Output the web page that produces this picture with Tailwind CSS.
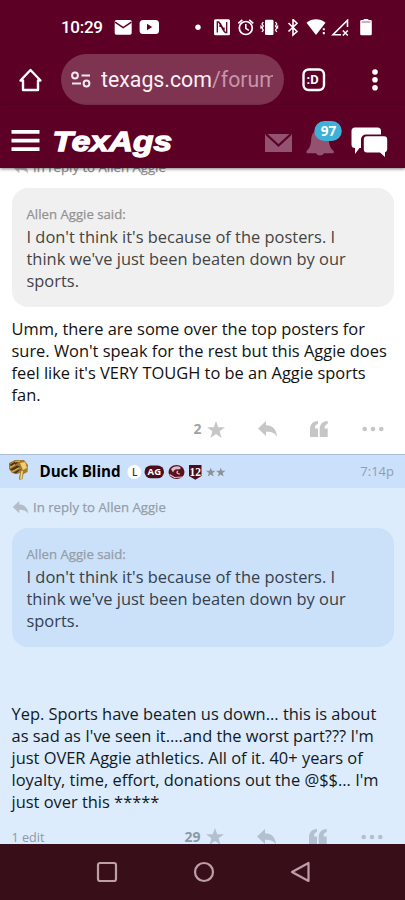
<!DOCTYPE html>
<html lang="en">
<head>
<meta charset="utf-8">
<meta name="viewport" content="width=device-width, initial-scale=1">
<title>TexAgs Forum</title>
<script src="https://cdn.jsdelivr.net/npm/@tailwindcss/browser@4"></script>
</head>
<body class="w-[405px] h-[900px] overflow-hidden bg-white font-['Open_Sans',sans-serif]">
<svg class="hidden">
  <symbol id="star" viewBox="0 0 18 17"><path d="M9 0l2.200 6.200H18l-5.400 4.100 2 6.700L9 13l-5.600 4 2-6.700L0 6.200h6.800z"/></symbol>
  <symbol id="reply" viewBox="0 0 19 16"><path d="M0 7.400L8 0v4.200c6.500 0 10.500 4 11 11.400C16.800 11.800 13.500 10.500 8 10.700V15z"/></symbol>
  <symbol id="quote" viewBox="0 0 18 16"><path d="M8 0v3C5.800 3.500 4.900 5 4.900 7.500H8V16H0V8.500C0 3.500 2.500.3 8 0zM17.700 0v3c-2.200.5-3.100 2-3.100 4.500h3.100V16h-8V8.500C9.700 3.500 12.200.3 17.700 0z"/></symbol>
  <symbol id="dots" viewBox="0 0 22 6"><circle cx="2.700" cy="3" r="2.300"/><circle cx="11" cy="3" r="2.300"/><circle cx="19.300" cy="3" r="2.300"/></symbol>
</svg>
<div class="flex h-full flex-col">
  <!-- Browser chrome -->
  <div class="shrink-0 bg-[#5c0025] text-white font-[Roboto,sans-serif]">
    <div class="flex h-[54px] items-start pl-[61px] pt-[17px]">
      <span class="w-[53px] text-[17px] leading-[21px] font-medium tracking-[-0.3px]">10:29</span>
      <svg class="mt-[2px]" width="291" height="18" viewBox="114 19 291 18" fill="#fff">
        <rect x="114.700" y="20" width="17" height="14.800" rx="1.800"/>
        <path d="M115 22.200l8.200 5.500 8.200-5.500" fill="none" stroke="#5c0025" stroke-width="1.500"/>
        <rect x="139.600" y="20" width="19.400" height="14" rx="3.500"/>
        <path d="M147 23.800v6.400l5.200-3.200z" fill="#5c0025"/>
        <circle cx="198" cy="27.200" r="2.700"/>
        <rect x="214" y="19.200" width="16" height="16" rx="1.500"/>
        <path d="M217.300 32.500V22h1.500l5.200 9.500v-4M226.700 22v10.500h-1.500l-5.200-9.500v4" fill="none" stroke="#5c0025" stroke-width="1.300"/>
        <circle cx="245.800" cy="28" r="6.500" fill="none" stroke="#fff" stroke-width="1.700"/>
        <path d="M245.800 24v4.300l3 2M238.300 23.300l4-3.400M253.300 23.300l-4-3.400" fill="none" stroke="#fff" stroke-width="1.600"/>
        <rect x="265" y="19.800" width="8.500" height="15.200" rx="1.200"/>
        <path d="M263.300 22l-1.300 2 1.300 2-1.300 2 1.300 2-1.300 2M275.500 22l1.300 2-1.300 2 1.300 2-1.300 2 1.300 2M260.500 25.500l.8 1.500-.8 1.500M278 25.500l-.8 1.500.8 1.500" fill="none" stroke="#fff" stroke-width="1.300"/>
        <path d="M288.500 23l8.500 8.500-4 3.500V19.500l4 3.700-8.500 8.300" fill="none" stroke="#fff" stroke-width="1.600"/>
        <path d="M306.500 22.800c5.500-4.600 13.500-4.600 19 0L316 35z"/>
        <path d="M322 28h2v7h-2z" fill="#5c0025"/>
        <path d="M323.800 28.200v2M323.800 32v2.200" stroke="#fff" stroke-width="2"/>
        <path d="M347.500 27V20.300L333 34.800h8" fill="none" stroke="#fff" stroke-width="1.600"/>
        <path d="M342.800 30.500l5 5m0-5l-5 5" stroke="#fff" stroke-width="1.500"/>
        <path d="M361.500 20h2.200v-1.500h4.600V20h2.200a1.300 1.300 0 0 1 1.300 1.300V34a1.300 1.300 0 0 1-1.300 1.300h-9a1.300 1.300 0 0 1-1.300-1.300V21.300A1.300 1.300 0 0 1 361.500 20z"/>
        <path d="M361.500 22h9" stroke="#5c0025" stroke-width="1" opacity=".6"/>
      </svg>
    </div>
    <div class="flex h-[51px] items-center pl-[18px]">
      <svg class="mr-[18px]" width="25" height="26" viewBox="0 0 25 26" fill="none" stroke="#fff" stroke-width="2.400" stroke-linejoin="round" stroke-linecap="round"><path d="M2.500 13.500L12.500 3l10 10.500h-2.500v9.500H5v-9.500z"/></svg>
      <div class="flex h-[51px] w-[223px] items-center rounded-full bg-[#7e3350] pl-[10px]">
        <svg width="20" height="18" viewBox="0 0 20 18" fill="none" stroke="#f6e8ee" stroke-width="2"><circle cx="4" cy="4.500" r="2.900"/><path d="M10.500 4.500H19M1 12.500h9"/><circle cx="15.500" cy="12.500" r="2.900"/></svg>
        <div class="ml-[10px] w-[172px] overflow-hidden whitespace-nowrap pt-px text-[21.300px] leading-[30px] text-[#fbf0f4]">texags.com<span class="text-[#c795aa]">/forum</span></div>
      </div>
      <svg class="ml-[18px]" width="24" height="24" viewBox="0 0 24 24"><rect x="1.500" y="1.500" width="20.500" height="20.500" rx="5" fill="none" stroke="#fff" stroke-width="2.400"/><text x="4.500" y="16.200" fill="#fff" font-family="Roboto, sans-serif" font-weight="700" font-size="13">:D</text></svg>
      <svg class="ml-[45px]" width="8" height="24" viewBox="0 0 8 24" fill="#fff"><circle cx="4" cy="4" r="2.800"/><circle cx="4" cy="11.800" r="2.800"/><circle cx="4" cy="19.700" r="2.800"/></svg>
    </div>
  </div>
  <!-- Site header -->
  <header class="relative z-10 flex h-[63px] shrink-0 items-start bg-[#5c0025] pl-[11px] pt-[15px] shadow-[0_1px_3px_rgba(0,0,0,0.5)]">
    <svg class="mt-[10px]" width="29" height="22" viewBox="0 0 29 22" fill="#fff"><path d="M.5 0h28v3.700H.5zM.5 8.700h28v3.700H.5zM.5 17.200h28v3.700H.5z"/></svg>
    <svg class="ml-[12px] mt-[6px]" width="124" height="34" viewBox="52 126 124 34"><text transform="translate(52.500 151.200)" x="0" y="0" fill="#fff" stroke="#fff" stroke-width="1.300" font-family="'Liberation Sans', sans-serif" font-weight="700" font-style="italic" font-size="27.500" textLength="119.500" lengthAdjust="spacingAndGlyphs">TexAgs</text></svg>
    <svg class="ml-[88px]" width="128" height="44" viewBox="264 120 128 44">
      <path d="M265 134h27v18h-27z" fill="#925270"/><path d="M266 134l12.500 11.500L291 134" fill="none" stroke="#5c0025" stroke-width="2.200"/>
      <path d="M320 130c-6 0-8.500 4-8.800 9.500-.3 6-1.700 9-4.700 11.500v2.200h9.500a4.300 3.600 0 0 0 8 0h9.700V151c-3.200-2.500-4.500-5.500-4.900-11.500-.3-5.500-2.800-9.500-8.800-9.500z" fill="#925270"/>
      <rect x="314.300" y="121" width="27.500" height="20" rx="10" fill="#3fb0d8"/>
      <text x="328.500" y="135.500" text-anchor="middle" fill="#fff" font-family="'Open Sans', sans-serif" font-weight="700" font-size="13.500">97</text>
      <path d="M355 127.500h22.500a3.500 3.500 0 0 1 3.500 3.500v3.500h-15a5 5 0 0 0-5 5v8.500h-1.500l-4.500 6v-6a3.500 3.500 0 0 1-3.500-3.500V131a3.500 3.500 0 0 1 3.500-3.500z" fill="#fff"/>
      <path d="M367 136.300h17a3.200 3.200 0 0 1 3.200 3.200v9.700a3.200 3.200 0 0 1-2.200 3v4.800l-5-4.500h-13a3.200 3.200 0 0 1-3.200-3.200v-9.800a3.200 3.200 0 0 1 3.200-3.200z" fill="#fff"/>
    </svg>
  </header>
  <!-- Thread -->
  <main class="h-[676px] shrink-0 overflow-hidden">
    <article class="-mt-[20px] h-[306px] px-[11.500px]">
      <div class="flex h-[40px] items-start pt-[9px] leading-[20px] text-[13.200px] text-[#8c8c8c] [-webkit-text-stroke:0.25px_#8c8c8c]">
        <svg class="mr-[4.500px] mt-[4px] text-[#bbb]" width="17" height="13" fill="currentColor"><use href="#reply"/></svg><span>In reply to Allen Aggie</span>
      </div>
      <blockquote class="h-[118.500px] rounded-[16px] bg-[#f0f0f0] px-[15px] pt-[17px]">
        <div class="text-[13.200px] leading-[18px] text-[#929292] [-webkit-text-stroke:0.25px_#929292]">Allen Aggie said:</div>
        <p class="mt-[2.500px] whitespace-nowrap text-[16.430px] leading-[22.150px] text-[#444]">I don't think it's because of the posters. I<br>think we've just been beaten down by our<br>sports.</p>
      </blockquote>
      <p class="mt-[11px] whitespace-nowrap text-[16.430px] leading-[22.150px] text-[#111]">Umm, there are some over the top posters for<br>sure. Won't speak for the rest but this Aggie does<br>feel like it's VERY TOUGH to be an Aggie sports<br>fan.</p>
      <div class="mt-[13px] flex h-[20px] items-center pl-[182px] text-[#c6c6c6]">
        <span class="mr-[5px] text-[14px] font-bold leading-[20px] text-[#a3a3a3]">2</span>
        <svg width="18" height="17" fill="currentColor"><use href="#star"/></svg>
        <svg class="ml-[33px]" width="19" height="16" fill="currentColor"><use href="#reply"/></svg>
        <svg class="ml-[33px]" width="18" height="16" fill="currentColor"><use href="#quote"/></svg>
        <svg class="ml-[34px]" width="22" height="6" fill="currentColor"><use href="#dots"/></svg>
      </div>
    </article>
    <article class="h-[400px] border-t border-[#a9bdd6] bg-[#dcecfc]">
      <div class="flex h-[33px] items-center bg-[#cbe0fb] pl-[8px] pr-[11px]">
        <svg class="-mt-[4px]" width="21" height="22" viewBox="0 0 21 22"><path d="M1 4l6-3 9 0 4 5-.5 7-4 2-1 5-3 1-.5-2 1-5-3 1-5-1-3-4z" fill="#a5782f"/><path d="M1.500 6l6-3.500 3 1-6 4zM2 10.500l7-4 3 1-7 4.500zM5 14l5-3 3-1-5 4.500z" fill="#4a3215"/><path d="M12 4l5-1 2 6-4 2zM13 12.500l2-1-1 8-2 1z" fill="#efd070"/><path d="M2 8.500l5-3M4 12.500l7-3.500M7 3l5-1" stroke="#d5b058" stroke-width="1.200"/></svg>
        <span class="ml-[10.500px] w-[83.500px] whitespace-nowrap text-[15.200px] font-bold tracking-[-0.05px] text-black">Duck Blind</span>
        <svg class="ml-[4px]" width="100" height="20" viewBox="127 462 100 20">
          <circle cx="134.300" cy="472" r="7" fill="#fff"/><text x="134.700" y="475.700" text-anchor="middle" font-family="'Open Sans',sans-serif" font-size="10" font-weight="600" fill="#5b2420">L</text>
          <rect x="144.500" y="465.500" width="19.500" height="12.800" rx="6.400" fill="#4b0c1c"/><text x="154.300" y="475.400" text-anchor="middle" font-family="'Open Sans',sans-serif" font-size="9.500" font-weight="700" fill="#fff">AG</text>
          <ellipse cx="176.500" cy="472" rx="8" ry="7" fill="#5a1020"/><path d="M171 469c2-3 8-4 10-1l-2 1.500c-3-1-5 0-6 3z" fill="#d9bfc4"/><path d="M169.500 474.500l5 3 8-.5M178 471c-2 1-1 3 2 3" fill="none" stroke="#dfc3c9" stroke-width="1.200"/>
          <path d="M189 465h12.500v11l-6.200 3.700-6.300-3.700z" fill="#4b0c1c"/><text x="195.200" y="475.500" text-anchor="middle" font-family="'Liberation Serif',serif" font-size="11.500" font-weight="700" fill="#fff">12</text>
          <use href="#star" x="206" y="467.500" width="9.500" height="9" fill="#8c929b"/><use href="#star" x="216" y="467.500" width="9.500" height="9" fill="#8c929b"/>
        </svg>
        <span class="ml-auto text-[13px] text-[#929eae]">7:14p</span>
      </div>
      <div class="px-[11.500px]">
        <div class="flex h-[40px] items-start pt-[8.500px] leading-[20px] text-[13.200px] text-[#949ea8] [-webkit-text-stroke:0.25px_#949ea8]">
          <svg class="mr-[4.500px] mt-[4.500px] text-[#b4bcc5]" width="17" height="13" fill="currentColor"><use href="#reply"/></svg><span>In reply to Allen Aggie</span>
        </div>
        <blockquote class="h-[119px] rounded-[16px] bg-[#cbe0f9] px-[15px] pt-[17px]">
          <div class="text-[13.200px] leading-[18px] text-[#949da8] [-webkit-text-stroke:0.25px_#949da8]">Allen Aggie said:</div>
          <p class="mt-[3px] whitespace-nowrap text-[16.430px] leading-[22.150px] text-[#35414e]">I don't think it's because of the posters. I<br>think we've just been beaten down by our<br>sports.</p>
        </blockquote>
        <p class="mt-[55.500px] whitespace-nowrap text-[16.430px] leading-[22.150px] text-[#111a24]">Yep. Sports have beaten us down... this is about<br>as sad as I've seen it....and the worst part??? I'm<br>just OVER Aggie athletics. All of it. 40+ years of<br>loyalty, time, effort, donations out the @$$... I'm<br>just over this *****</p>
        <div class="mt-[13.500px] flex h-[20px] items-center text-[#b2c0cf]">
          <span class="w-[173px] pt-[4px] text-[12.600px] text-[#8d98a5]">1 edit</span>
          <span class="mr-[5px] text-[14px] font-bold leading-[20px] text-[#8c99a7]">29</span>
          <svg width="18" height="17" fill="currentColor"><use href="#star"/></svg>
          <svg class="ml-[33px]" width="19" height="16" fill="currentColor"><use href="#reply"/></svg>
          <svg class="ml-[33px]" width="18" height="16" fill="currentColor"><use href="#quote"/></svg>
          <svg class="ml-[34.500px]" width="22" height="6" fill="currentColor"><use href="#dots"/></svg>
        </div>
      </div>
    </article>
  </main>
  <!-- System navigation -->
  <nav class="flex h-[56px] shrink-0 items-center gap-[75px] bg-[#380f18] pl-[96px]">
    <svg width="22" height="22" viewBox="0 0 22 22" fill="none" stroke="#bd9fa7" stroke-width="2.200"><rect x="2" y="2" width="18" height="18" rx="2"/></svg>
    <svg width="22" height="22" viewBox="0 0 22 22" fill="none" stroke="#bd9fa7" stroke-width="2.200"><circle cx="11" cy="11" r="9"/></svg>
    <svg width="22" height="22" viewBox="0 0 22 22" fill="none" stroke="#bd9fa7" stroke-width="2.200" stroke-linejoin="round"><path d="M18.500 2v18L2 11z"/></svg>
  </nav>
</div>
</body>
</html>
